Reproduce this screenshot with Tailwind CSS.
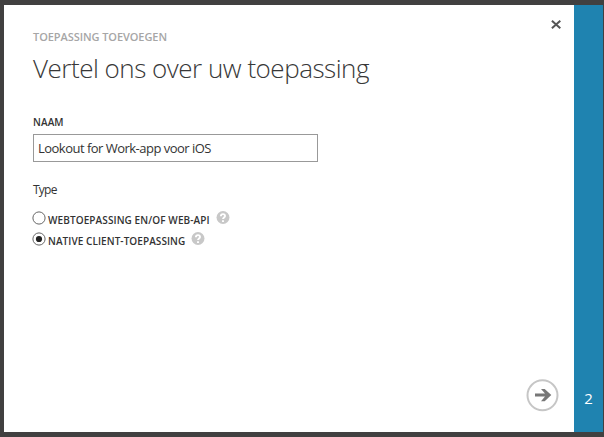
<!DOCTYPE html>
<html lang="nl">
<head>
<meta charset="utf-8">
<title>Toepassing toevoegen</title>
<script src="https://cdn.jsdelivr.net/npm/@tailwindcss/browser@4"></script>
</head>
<body class="h-[437px] w-[604px] overflow-hidden bg-[#414040] font-['Open_Sans','Noto_Sans',sans-serif]">
<div class="flex h-full pt-[5px] pr-px pb-[5px] pl-1">
  <main class="flex flex-1 justify-between bg-white pl-[29px]">
    <form class="flex flex-col items-start whitespace-nowrap text-[#333]">
      <p class="mt-[24px] h-4 text-[11px] leading-4 font-semibold tracking-[-0.07px] text-[#a6a6a6]">TOEPASSING TOEVOEGEN</p>
      <h1 class="mt-[5px] h-9 text-[26px] leading-9 font-light tracking-[-0.49px] text-[#383838]">Vertel ons over uw toepassing</h1>
      <label class="mt-[28px] h-4 text-[10px] leading-4 font-semibold tracking-[0.1px]">NAAM</label>
      <div class="mt-[4px] flex h-7 w-[285px] items-center border border-[#999] pl-1 text-[13px] leading-6 tracking-[-0.52px]">Lookout for Work-app voor iOS</div>
      <p class="mt-[20px] h-4 text-[12px] leading-4 tracking-[-0.75px]">Type</p>
      <div class="mt-[13px] flex h-[14px] items-start">
        <svg class="h-[14px] w-[14px] overflow-visible" viewBox="0 0 14 14"><circle cx="6" cy="7" r="6.1" fill="#fff" stroke="#666"/></svg>
        <span class="ml-px pt-[1px] text-[10px] leading-4 font-semibold tracking-[0.1px]">WEBTOEPASSING EN/OF WEB-API</span>
        <svg class="ml-[6px] h-[14px] w-[14px]" viewBox="0 0 14 14"><circle cx="7" cy="6.5" r="6.5" fill="#c8c8c8"/><path d="M4.9 5.2C4.9 2.4 9 2.5 9 4.9C9 6.4 7 6.5 7 8.1M7 9.2V10.9" fill="none" stroke="#fff" stroke-width="1.9"/></svg>
      </div>
      <div class="mt-[7px] flex h-[14px] items-start">
        <svg class="h-[14px] w-[14px] overflow-visible" viewBox="0 0 14 14"><circle cx="6" cy="7" r="6.1" fill="#fff" stroke="#666"/><circle cx="6" cy="7" r="3.1" fill="#222"/></svg>
        <span class="ml-px pt-[1px] text-[10px] leading-4 font-semibold tracking-[0.07px]">NATIVE CLIENT-TOEPASSING</span>
        <svg class="ml-[6px] h-[14px] w-[14px]" viewBox="0 0 14 14"><circle cx="7" cy="6.5" r="6.5" fill="#c8c8c8"/><path d="M4.9 5.2C4.9 2.4 9 2.5 9 4.9C9 6.4 7 6.5 7 8.1M7 9.2V10.9" fill="none" stroke="#fff" stroke-width="1.9"/></svg>
      </div>
    </form>
    <div class="flex flex-col items-end justify-between">
      <svg class="mt-[14px] mr-[12px] h-[11px] w-[11px]" viewBox="0 0 11 11"><path d="M0.9 1.7L9.3 9.3M9.3 1.7L0.9 9.3" stroke="#555" stroke-width="2"/></svg>
      <svg class="mr-[14px] mb-5 h-[34px] w-[34px]" viewBox="0 0 34 34"><circle cx="16.5" cy="17.3" r="15" fill="none" stroke="#c6c6c6" stroke-width="2"/><path d="M9 15.5H19L15 11H18.7L25.3 17L18.7 23.3H15L19 18.5H9Z" fill="#777"/></svg>
    </div>
  </main>
  <aside class="flex w-[29px] items-end justify-center bg-[#1f83b0] pb-[22px] text-[15px] leading-6 text-white">2</aside>
</div>
</body>
</html>
